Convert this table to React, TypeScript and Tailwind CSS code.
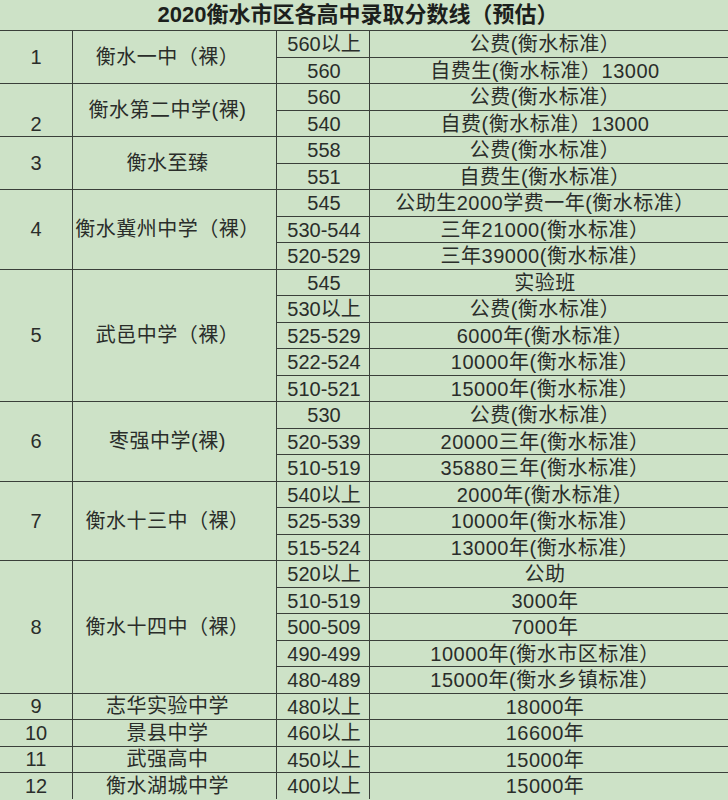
import React from "react";

type Group = { n: string; name: string; rows: [string, string][]; nBottom?: boolean };

const groups: Group[] = [
  { n: "1", name: "衡水一中（裸）", rows: [["560以上", "公费(衡水标准）"], ["560", "自费生(衡水标准）13000"]] },
  { n: "2", name: "衡水第二中学(裸)", rows: [["560", "公费(衡水标准）"], ["540", "自费(衡水标准）13000"]], nBottom: true },
  { n: "3", name: "衡水至臻", rows: [["558", "公费(衡水标准）"], ["551", "自费生(衡水标准）"]] },
  {
    n: "4",
    name: "衡水冀州中学（裸）",
    rows: [
      ["545", "公助生2000学费一年(衡水标准）"],
      ["530-544", "三年21000(衡水标准）"],
      ["520-529", "三年39000(衡水标准）"],
    ],
  },
  {
    n: "5",
    name: "武邑中学（裸）",
    rows: [
      ["545", "实验班"],
      ["530以上", "公费(衡水标准）"],
      ["525-529", "6000年(衡水标准）"],
      ["522-524", "10000年(衡水标准）"],
      ["510-521", "15000年(衡水标准）"],
    ],
  },
  {
    n: "6",
    name: "枣强中学(裸)",
    rows: [
      ["530", "公费(衡水标准）"],
      ["520-539", "20000三年(衡水标准）"],
      ["510-519", "35880三年(衡水标准）"],
    ],
  },
  {
    n: "7",
    name: "衡水十三中（裸）",
    rows: [
      ["540以上", "2000年(衡水标准）"],
      ["525-539", "10000年(衡水标准）"],
      ["515-524", "13000年(衡水标准）"],
    ],
  },
  {
    n: "8",
    name: "衡水十四中（裸）",
    rows: [
      ["520以上", "公助"],
      ["510-519", "3000年"],
      ["500-509", "7000年"],
      ["490-499", "10000年(衡水市区标准）"],
      ["480-489", "15000年(衡水乡镇标准）"],
    ],
  },
  { n: "9", name: "志华实验中学", rows: [["480以上", "18000年"]] },
  { n: "10", name: "景县中学", rows: [["460以上", "16600年"]] },
  { n: "11", name: "武强高中", rows: [["450以上", "15000年"]] },
  { n: "12", name: "衡水湖城中学", rows: [["400以上", "15000年"]] },
];

const span: Record<number, string> = {
  1: "row-span-1",
  2: "row-span-2",
  3: "row-span-3",
  5: "row-span-5",
};

export default function App() {
  return (
    <div
      className="w-[728px] h-[800px] overflow-hidden bg-[#cde2c7] text-[#2a2d2a]"
      style={{ fontFamily: '"Liberation Sans", "Noto Sans CJK SC", sans-serif' }}
    >
      <div className="h-[30px] flex items-end justify-center pr-[12px] pb-[1px] text-[22px] leading-[28px] font-bold text-[#1c1f1c]">
        2020衡水市区各高中录取分数线（预估）
      </div>
      <div className="grid grid-cols-[73px_204px_93px_1fr] grid-rows-[repeat(29,26.5px)] text-[20px] leading-none">
        {groups.map((g) => (
          <React.Fragment key={g.n}>
            <div
              className={`${span[g.rows.length]} border-t border-r border-[#3a3f3a] flex flex-col ${
                g.nBottom ? "justify-end" : "justify-center"
              } items-center`}
            >
              <div className="h-[25px] flex items-center">{g.n}</div>
            </div>
            <div
              className={`${span[g.rows.length]} border-t border-r border-[#3a3f3a] flex items-center justify-center pr-[14px] tracking-[0.5px]`}
            >
              {g.name}
            </div>
            {g.rows.map(([a, b], i) => (
              <React.Fragment key={i}>
                <div className="border-t border-r border-[#3a3f3a] flex items-center justify-center pt-[1px] pl-[2px]">
                  {a}
                </div>
                <div className="border-t border-[#3a3f3a] flex items-center justify-center pt-[1px] pr-[8px] tracking-[0.5px]">
                  {b}
                </div>
              </React.Fragment>
            ))}
          </React.Fragment>
        ))}
      </div>
    </div>
  );
}
